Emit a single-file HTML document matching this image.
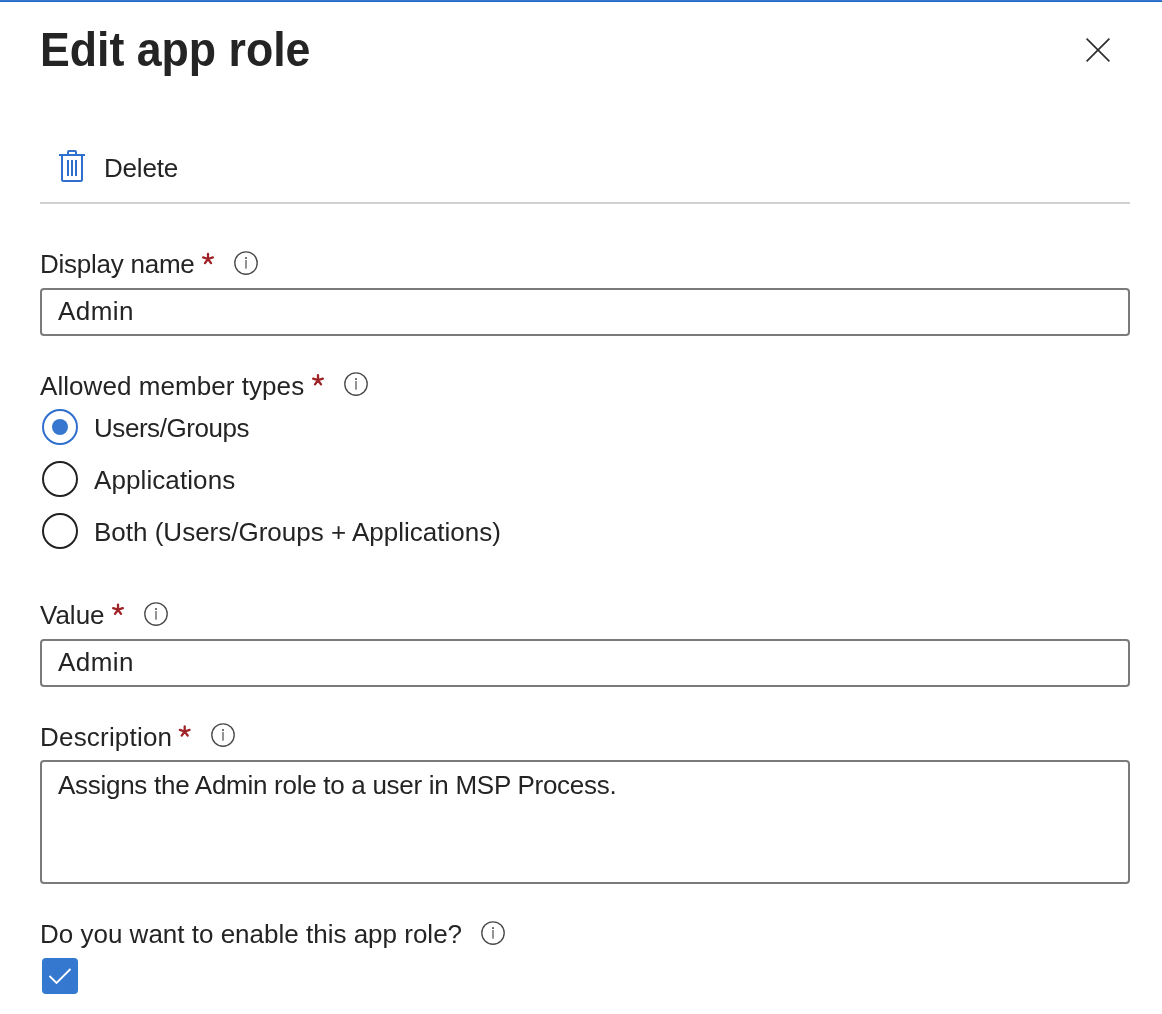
<!DOCTYPE html>
<html>
<head>
<meta charset="utf-8">
<style>
html,body{margin:0;padding:0;background:#fff;}
body{width:1162px;height:1014px;position:relative;overflow:hidden;font-family:"Liberation Sans",sans-serif;color:#242424;}
.t{position:absolute;font-size:26px;line-height:30px;white-space:nowrap;color:#242424;will-change:transform;}
.box{position:absolute;box-sizing:border-box;border:2px solid #7b7b7b;border-radius:4px;background:#fff;}
svg{position:absolute;overflow:visible;}
</style>
</head>
<body>
<div style="position:absolute;left:0;top:0;width:1162px;height:1px;background:#3a78cc"></div>
<div style="position:absolute;left:0;top:1px;width:1162px;height:1px;background:#2368c8"></div>

<div class="t" style="left:40px;top:25.6px;font-size:44.66px;line-height:50px;font-weight:bold;transform:scaleY(1.09);transform-origin:0 40px;">Edit app role</div>

<!-- close X -->
<svg style="left:0;top:0" width="1162" height="1014">
  <path d="M1086.6 38.6 L1109.4 61.4 M1109.4 38.6 L1086.6 61.4" stroke="#2b2b2b" stroke-width="1.6" fill="none"/>
  <!-- trash -->
  <g stroke="#2f6fcd" stroke-width="2" fill="none">
    <path d="M59 155 H85"/>
    <path d="M68 155 V152 Q68 151 69 151 H75 Q76 151 76 152 V155"/>
    <path d="M62 155 V179.5 Q62 181 63.5 181 H80.5 Q82 181 82 179.5 V155"/>
    <path d="M68 160 V176 M72 160 V176 M76 160 V176"/>
  </g>
</svg>

<div class="t" style="left:104px;top:153px;letter-spacing:-0.2px;">Delete</div>
<div style="position:absolute;left:40px;top:202px;width:1090px;height:2px;background:#d1d1d1"></div>

<!-- Display name -->
<div class="t" style="left:40px;top:249px;letter-spacing:-0.25px;">Display name</div>
<div class="box" style="left:40px;top:288px;width:1090px;height:48px;"></div>
<div class="t" style="left:58px;top:296px;letter-spacing:0.45px;">Admin</div>

<!-- Allowed member types -->
<div class="t" style="left:40px;top:371px;letter-spacing:0.06px;">Allowed member types</div>
<div class="t" style="left:94px;top:413px;letter-spacing:-0.45px;">Users/Groups</div>
<div class="t" style="left:94px;top:465px;letter-spacing:0.09px;">Applications</div>
<div class="t" style="left:94px;top:517px;">Both (Users/Groups + Applications)</div>

<!-- Value -->
<div class="t" style="left:40px;top:600px;">Value</div>
<div class="box" style="left:40px;top:639px;width:1090px;height:48px;"></div>
<div class="t" style="left:58px;top:647px;letter-spacing:0.45px;">Admin</div>

<!-- Description -->
<div class="t" style="left:39.5px;top:722px;letter-spacing:0.2px;">Description</div>
<div class="box" style="left:40px;top:760px;width:1090px;height:124px;"></div>
<div class="t" style="left:58px;top:770px;letter-spacing:-0.28px;">Assigns the Admin role to a user in MSP Process.</div>

<!-- Enable -->
<div class="t" style="left:40px;top:919px;">Do you want to enable this app role?</div>

<svg style="left:0;top:0" width="1162" height="1014">
  <defs>
    <g id="ast"><path d="M0 -5.1 L0 0 M4.85 -1.58 L0 0 M3.0 4.13 L0 0 M-3.0 4.13 L0 0 M-4.85 -1.58 L0 0" stroke="#9e2226" stroke-width="2.3" stroke-linecap="round" fill="none"/></g>
    <g id="info">
      <circle cx="0" cy="0" r="11.2" stroke="#4a4a4a" stroke-width="1.35" fill="none"/>
      <rect x="-0.95" y="-5.9" width="1.9" height="1.9" fill="#666"/>
      <rect x="-0.8" y="-3" width="1.6" height="8.7" fill="#7a7a7a"/>
    </g>
  </defs>
  <use href="#ast" x="208" y="259"/>
  <use href="#info" x="246" y="263"/>
  <use href="#ast" x="318" y="380.2"/>
  <use href="#info" x="356" y="384"/>
  <use href="#ast" x="118" y="609.7"/>
  <use href="#info" x="156" y="614"/>
  <use href="#ast" x="184.7" y="731.5"/>
  <use href="#info" x="223" y="735"/>
  <use href="#info" x="493" y="933"/>

  <!-- radios -->
  <circle cx="60" cy="427" r="17" stroke="#2f6fcd" stroke-width="2" fill="none"/>
  <circle cx="60" cy="427" r="8" fill="#3777cf"/>
  <circle cx="60" cy="479" r="17" stroke="#222" stroke-width="2" fill="none"/>
  <circle cx="60" cy="531" r="17" stroke="#222" stroke-width="2" fill="none"/>

  <!-- checkbox -->
  <rect x="42" y="958" width="36" height="36" rx="4" fill="#3578d0"/>
  <path d="M49.5 976 L56.5 983 L70.5 969" stroke="#fff" stroke-width="1.8" fill="none"/>
</svg>
</body>
</html>
